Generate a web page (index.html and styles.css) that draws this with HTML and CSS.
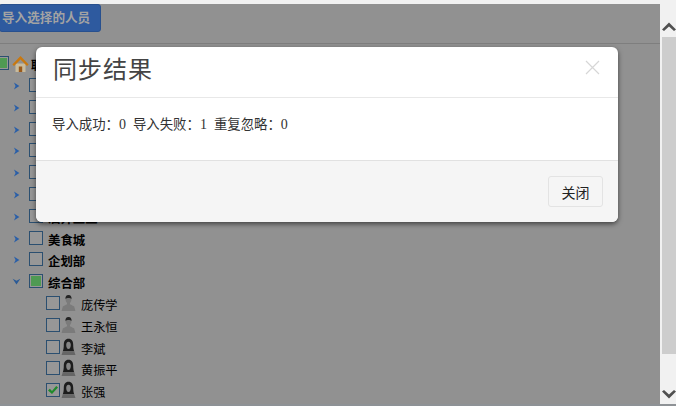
FILE: index.html
```html
<!DOCTYPE html>
<html lang="zh-CN">
<head>
<meta charset="utf-8">
<title>同步结果</title>
<link rel="stylesheet" href="styles.css">
</head>
<body>
<svg class="defs" width="0" height="0" aria-hidden="true">
  <defs>
    <symbol id="arrow" viewBox="0 0 8 10"><path d="M.8 .6 7.600 5 .8 9.400 2.800 5z" fill="#2a5fa8"/></symbol>
    <symbol id="down" viewBox="0 0 10 8"><path d="M.6 .8 5 7.400 9.400 .8 5 3z" fill="#2a5a96"/></symbol>
    <symbol id="man" viewBox="0 0 15 18"><path d="M7.500 1C5.400 1 4.400 2.500 4.500 4.700 4.600 6.800 5.300 8.200 6 9v1.300L1.800 12.600.6 17h13.800l-1.200-4.400L9 10.300V9c.7-.8 1.400-2.200 1.500-4.300C10.600 2.500 9.600 1 7.500 1z" fill="#7b7b7b"/><path d="M4.500 4.900C4.300 2.500 5.400 1 7.500 1s3.200 1.500 3 3.900C9.200 3.700 5.800 3.700 4.500 4.900z" fill="#252525"/></symbol>
    <symbol id="woman" viewBox="0 0 15 18"><path d="M7.500.8C4.300.8 2.800 3.200 2.800 6.800c0 2.800-.4 5-1 6.400h11.400c-.6-1.400-1-3.600-1-6.400C12.200 3.200 10.700.8 7.500.8z" fill="#1d1d1d"/><path d="M7.500 3.800c-1.600 0-2.300 1.300-2.300 3.200 0 2.200.8 4 2.300 4s2.300-1.800 2.300-4c0-1.900-.7-3.200-2.300-3.200z" fill="#858585"/><path d="M1.800 13.200h11.400l1.300 3.800H.5z" fill="#666"/></symbol>
  </defs>
</svg>
<div class="topstrip"></div>
<div class="frame">
  <main class="page">
    <div class="toolbar"><button class="primary">导入选择的人员</button></div>
    <ul class="tree">
      <li class="row root"><span class="check half"></span><svg class="home" width="17" height="18" viewBox="0 0 17 18"><path d="M3.500 8.500v8.500h10V8.500z" fill="#c9bb9c"/><path d="M6.800 11.500h3.400V17H6.800z" fill="#9a5a1c"/><path d="M.4 9.600 8.500 1l8.100 8.600-1.600 1.500L8.500 4.400 2 11.100z" fill="#c9780f"/></svg><b class="dept">联</b></li>
      <li class="row"><svg class="twist"><use href="#arrow"/></svg><span class="check"></span></li>
      <li class="row"><svg class="twist"><use href="#arrow"/></svg><span class="check"></span></li>
      <li class="row"><svg class="twist"><use href="#arrow"/></svg><span class="check"></span></li>
      <li class="row"><svg class="twist"><use href="#arrow"/></svg><span class="check"></span></li>
      <li class="row"><svg class="twist"><use href="#arrow"/></svg><span class="check"></span></li>
      <li class="row"><svg class="twist"><use href="#arrow"/></svg><span class="check"></span></li>
      <li class="row"><svg class="twist"><use href="#arrow"/></svg><span class="check"></span><b class="dept">酒并业主</b></li>
      <li class="row"><svg class="twist"><use href="#arrow"/></svg><span class="check"></span><b class="dept">美食城</b></li>
      <li class="row"><svg class="twist"><use href="#arrow"/></svg><span class="check"></span><b class="dept">企划部</b></li>
      <li class="row"><svg class="twist open"><use href="#down"/></svg><span class="check half"></span><b class="dept">综合部</b></li>
      <li class="row person"><span class="check"></span><svg class="avatar"><use href="#man"/></svg><span class="name">庞传学</span></li>
      <li class="row person"><span class="check"></span><svg class="avatar"><use href="#man"/></svg><span class="name">王永恒</span></li>
      <li class="row person"><span class="check"></span><svg class="avatar"><use href="#woman"/></svg><span class="name">李斌</span></li>
      <li class="row person"><span class="check"></span><svg class="avatar"><use href="#woman"/></svg><span class="name">黄振平</span></li>
      <li class="row person"><span class="check on"><svg width="12" height="12" viewBox="0 0 12 12"><path d="M1 6.500 2.800 4.800 5 7l4.200-5L11 3.500 5 10z" fill="#1f8a2a"/></svg></span><svg class="avatar"><use href="#woman"/></svg><span class="name">张强</span></li>
    </ul>
    <section class="modal">
      <header class="modal-head">
        <h4>同步结果</h4>
        <svg class="close" width="15" height="15" viewBox="0 0 15 15"><path d="M1 1l13 13M14 1 1 14" stroke="#d6d6d6" stroke-width="1.200" fill="none"/></svg>
      </header>
      <div class="modal-body">导入成功<span class="colon">：</span><i>0 </i>导入失败<span class="colon">：</span><i>1 </i>重复忽略<span class="colon">：</span><i>0</i></div>
      <footer class="modal-foot"><button class="ghost">关闭</button></footer>
    </section>
  </main>
  <aside class="scrollbar">
    <svg width="14" height="16" viewBox="0 0 14 16"><path d="M0 11.500 7 4.500l7 7-2 1.500L7 8.500 2 13z" fill="#505050"/></svg>
    <div class="thumb"></div>
    <svg width="14" height="16" viewBox="0 0 14 16"><path d="M0 4.500 7 11.500l7-7-2-1.500L7 7.500 2 3z" fill="#505050"/></svg>
  </aside>
</div>
<div class="bottomstrip"></div>
</body>
</html>
```
FILE: styles.css
```css
* { box-sizing: border-box; }
html, body { margin: 0; padding: 0; height: 406px; overflow: hidden; }
body { background: #f1f1f1; font-family: "Liberation Sans", "Noto Sans CJK SC", sans-serif; }
.defs { position: absolute; }
.topstrip { height: 4px; background: #f1f1f1; }
.bottomstrip { height: 2px; background: #8e9296; }
.frame { display: flex; height: 400px; }
.page { position: relative; width: 660px; background: #919191; overflow: hidden; }
.toolbar { height: 40px; border-bottom: 1px solid #7e7e7e; }
.primary {
  display: block; width: 102px; height: 28px; margin-left: -1px; padding: 0 0 3px 2px;
  background: #2e5a9f; border: 1px solid #28508e; border-radius: 3px; text-align: left; white-space: nowrap;
  color: #a3a3a3; font: bold 12.6px "Liberation Sans", "Noto Sans CJK SC", sans-serif;
}
.tree { list-style: none; margin: 0; padding: 10.3px 0 0; }
.row { display: flex; align-items: center; height: 21.8px; }
.twist { width: 7px; height: 8px; flex: none; margin: -2px 9px 0 13px; }
.twist.open { width: 9px; height: 7px; margin: -4px 8px 0 12px; }
.check { display: flex; align-items: center; justify-content: center; width: 14px; height: 14px; flex: none; margin-top: -4px; background: #979797; border: 1.5px solid #2b4f70; }
.root .check { margin-left: -5px; }
.check.half::after { content: ""; width: 10px; height: 10px; background: #4f9a53; }
.dept { margin-left: 5px; font-size: 12.4px; font-weight: bold; color: #000; white-space: nowrap; }
.home { margin: -3px 2px 0 3px; flex: none; }
.root .dept { margin-left: 0; }
.person { padding-left: 46px; }
.avatar { width: 15px; height: 18px; flex: none; margin: -4px 5px 0 1px; }
.name { font-size: 12.2px; color: #000; }
.modal {
  position: absolute; left: 36px; top: 43px; width: 582px; height: 175px;
  display: flex; flex-direction: column;
  background: #fff; border-radius: 6px; box-shadow: 0 2px 5px rgba(0,0,0,.55);
}
.modal-head { display: flex; justify-content: space-between; align-items: center; height: 51px; padding: 0 18px 10px 17px; border-bottom: 1px solid #e8e8e8; flex: none; }
.modal-head h4 { margin: 0; font-size: 24px; font-weight: normal; color: #444; letter-spacing: 1px; }
.modal-body { flex: 1; padding: 15px 16px 0; font: 13.4px/20px "Liberation Sans", "Noto Sans CJK SC", sans-serif; color: #333; white-space: pre; }
.colon { font-family: "Noto Sans CJK TC", sans-serif; }
.modal-body i { font: normal 14px "Liberation Serif", serif; word-spacing: 3.5px; color: #333; }
.modal-foot { display: flex; justify-content: flex-end; align-items: flex-start; height: 62px; flex: none; padding: 15px 15px 0; background: #f5f5f5; border-top: 1px solid #e1e1e1; border-radius: 0 0 6px 6px; }
.ghost { width: 55px; height: 31px; padding: 0; background: #f5f5f5; border: 1px solid #e3e3e3; border-radius: 3px; font: 14px "Liberation Sans", "Noto Sans CJK SC", sans-serif; color: #222; }
.scrollbar { width: 16px; display: flex; flex-direction: column; align-items: flex-end; background: #f1f1f1; padding: 14px 0 0; }
.scrollbar svg { flex: none; }
.thumb { width: 14px; height: 317px; margin: 3px 0 33px; background: #cdcdcd; }
```
